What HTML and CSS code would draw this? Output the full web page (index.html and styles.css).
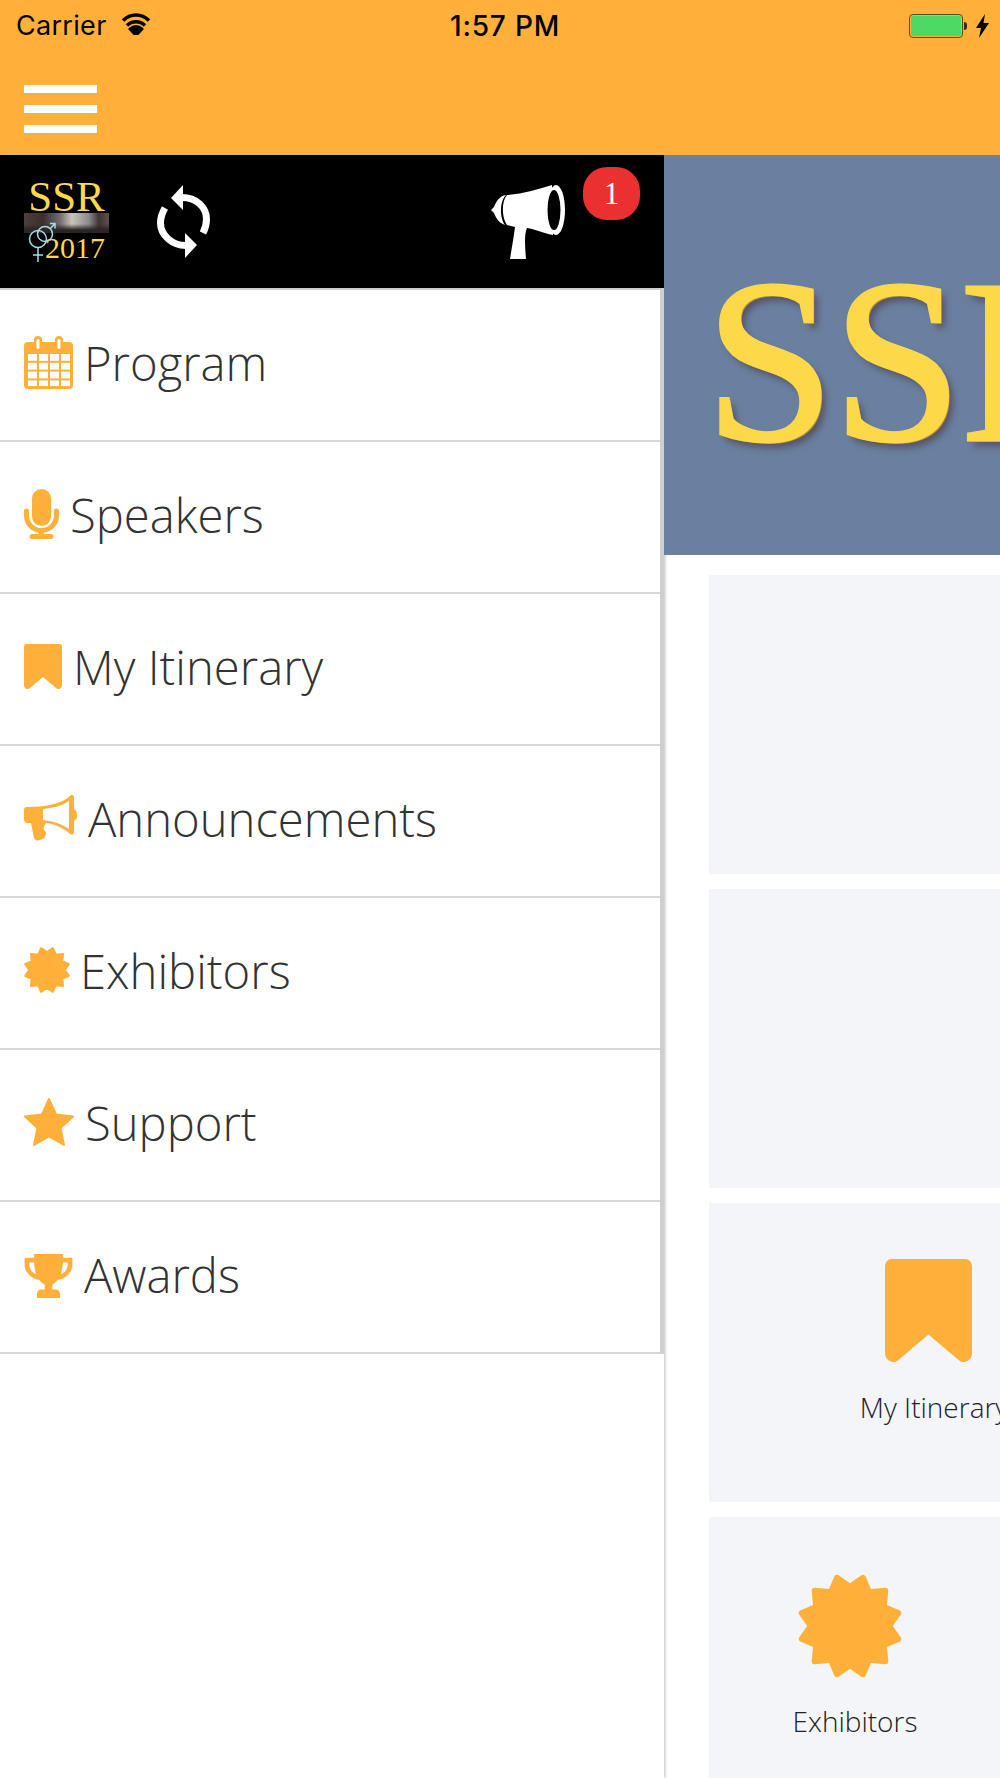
FILE: index.html
```html
<!DOCTYPE html>
<html lang="en">

<head>
  <meta charset="UTF-8">
  <meta name="viewport" content="width=device-width, initial-scale=1.0">
  <title>SSR 2017</title>
  <link rel="stylesheet" href="styles.css">
</head>

<body>
  <svg class="defs" width="0" height="0">
    <defs>
      <symbol id="bookmark" viewBox="0 0 38 45">
        <path d="M3 0H35A3 3 0 0 1 38 3V41C38 45 34 46 32 44L19 33L6 44C4 46 0 45 0 41V3A3 3 0 0 1 3 0Z" />
      </symbol>
      <symbol id="burst" viewBox="0 0 100 100">
        <polygon stroke-width="6" stroke-linejoin="round" points="86,50 94.4,61.9 81,67.5 82.5,82.5 67.5,81 61.9,94.4 50,86 38.1,94.4 32.5,81 17.5,82.5 19,67.5 5.6,61.9 14,50 5.6,38.1 19,32.5 17.5,17.5 32.5,19 38.1,5.6 50,14 61.9,5.6 67.5,19 82.5,17.5 81,32.5 94.4,38.1" />
      </symbol>
      <pattern id="cal-cells" x="4" y="18" width="11" height="8.8" patternUnits="userSpaceOnUse">
        <rect width="9" height="6.8" fill="#fff" />
      </pattern>
    </defs>
  </svg>

  <div class="statusbar">
    <div class="status-left">
      <span>Carrier</span>
      <svg class="wifi" viewBox="0 0 30 22">
        <path d="M15 22L9.5 16C12.5 13 17.500 13 20.500 16Z" fill="#000" />
        <path d="M6 12.500C11 7.500 19 7.500 24 12.500" />
        <path d="M2 7.500C9.500 0 20.500 0 28 7.500" />
      </svg>
    </div>
    <div class="status-time">1:57 PM</div>
    <div class="status-right">
      <div class="battery"><div class="battery-fill"></div></div>
      <div class="battery-cap"></div>
      <svg class="bolt" viewBox="0 0 13 24">
        <polygon points="9,0 0,14 5,14 3,24 13,9 7.500,9" fill="#000" />
      </svg>
    </div>
  </div>

  <div class="topbar">
    <div class="hamburger"><span></span><span></span><span></span></div>
  </div>

  <div class="layout">
    <div class="sidebar">
      <div class="side-head">
        <div class="logo">
          <div class="logo-ssr">SSR</div>
          <div class="logo-strip"></div>
          <div class="logo-year">2017</div>
          <svg class="logo-gender" viewBox="0 0 28 42">
            <g fill="none" stroke="#a8dbe8" stroke-width="1.500">
              <circle cx="10" cy="17" r="8.500" />
              <circle cx="17" cy="12" r="7.500" />
              <path d="M10 25.500V40M5 33H15M22 7L27 1.500M22 1.500H27V6.500" />
            </g>
          </svg>
        </div>
        <svg class="refresh" viewBox="0 0 54 73">
          <polygon points="14,13 26,0 26,25" fill="#fff" />
          <polygon points="40,60 28,48 28,73" fill="#fff" />
          <path d="M25 12.500C39 12.500 49.500 22 49.500 34C49.500 39 48.500 43 46 48" />
          <path d="M29 60.500C15 60.500 3.500 50 3.500 38C3.500 33 5 28 8 23" />
        </svg>
        <svg class="horn" viewBox="0 0 74 74">
          <path d="M15 10C8 11 5 17 3 22L0 25L3 28C5 33 8 38 14 40C9 34 8 17 15 10Z" />
          <path d="M16 10C32 9 48 4 61 0L62 50C52 48 44 44 36 43C33 50 34 62 35 74H19C21 62 23 50 24 42L16 40C11 33 10 17 16 10Z" />
          <ellipse cx="65" cy="25" rx="9" ry="25" />
          <ellipse cx="63" cy="25" rx="6.500" ry="20" fill="#000" />
        </svg>
        <div class="badge">1</div>
      </div>

      <div class="menu">
        <div class="menu-item">
          <svg class="ico ico-cal" viewBox="0 0 49 53">
            <path d="M4 6H10V4A4 4 0 0 1 18 4V6H31V4A4 4 0 0 1 39 4V6H45A4 4 0 0 1 49 10V49A4 4 0 0 1 45 53H4A4 4 0 0 1 0 49V10A4 4 0 0 1 4 6Z" />
            <rect x="12.500" y="3" width="3" height="10" rx="1.500" fill="#fff" />
            <rect x="33.500" y="3" width="3" height="10" rx="1.500" fill="#fff" />
            <rect x="4" y="18" width="42" height="32" fill="url(#cal-cells)" />
          </svg>
          <span>Program</span>
        </div>
        <div class="menu-item">
          <svg class="ico ico-mic" viewBox="0 0 35 50">
            <rect x="8" y="0" width="19" height="37" rx="9.500" />
            <path class="ico-line" d="M2.500 22V26C2.500 35 9 41.500 17.500 41.500C26 41.500 32.500 35 32.500 26V22" />
            <path class="ico-line" d="M17.500 41.500V47M8 47.500H27" />
          </svg>
          <span>Speakers</span>
        </div>
        <div class="menu-item">
          <svg class="ico ico-mark"><use href="#bookmark" /></svg>
          <span>My Itinerary</span>
        </div>
        <div class="menu-item">
          <svg class="ico ico-horn" viewBox="0 0 53 46">
            <path fill-rule="evenodd" d="M3 12C20 12 38 9 46 1C48 -1 50 0 50 3V14C52 15 53 17 53 20C53 23 52 25 50 26V37C50 40 48 40 46 39C40 33 31 29 22 28C20 31 19 33 20 35C22 37 23 39 21 41C21 43 19 44 16 45C13 46 11 45 10 43L7 28H3C1 28 0 26 0 24V15C0 13 1 12 3 12ZM19 14V25C29 26 38 29 45 34V6C38 11 29 13 19 14Z" />
          </svg>
          <span>Announcements</span>
        </div>
        <div class="menu-item">
          <svg class="ico ico-burst"><use href="#burst" /></svg>
          <span>Exhibitors</span>
        </div>
        <div class="menu-item">
          <svg class="ico ico-star" viewBox="0 0 50 48">
            <polygon stroke-width="2" stroke-linejoin="round" points="25,1 32,16.500 49,18.500 36.500,30 40,47 25,38.500 10,47 13.500,30 1,18.500 18,16.500" />
          </svg>
          <span>Support</span>
        </div>
        <div class="menu-item">
          <svg class="ico ico-cup" viewBox="0 0 50 46">
            <path fill-rule="evenodd" d="M10 0H40V4H50V11C50 19 43 26 35 27C33 29 31 31 29 32V37H33C36 37 37 40 37 42V46H13V42C13 40 14 37 17 37H21V32C19 31 17 29 15 27C7 26 0 19 0 11V4H10ZM5 9V11C5 16 8 20 12 21C11 17 10 13 10 9ZM45 9H40C40 13 39 17 38 21C42 20 45 16 45 11Z" />
          </svg>
          <span>Awards</span>
        </div>
      </div>
    </div>

    <div class="main">
      <div class="banner">SSR 2017</div>
      <div class="cards">
        <div class="card"></div>
        <div class="card"></div>
        <div class="card">
          <div class="card-item card-item-wide">
            <svg class="card-mark"><use href="#bookmark" /></svg>
            <div class="card-label">My Itinerary</div>
          </div>
        </div>
        <div class="card">
          <div class="card-item">
            <svg class="card-burst"><use href="#burst" /></svg>
            <div class="card-label">Exhibitors</div>
          </div>
        </div>
      </div>
    </div>
  </div>
</body>

</html>
```

FILE: styles.css
```css
* {
  box-sizing: border-box;
}

html,
body {
  margin: 0;
  height: 1778px;
  overflow: hidden;
  background: #fff;
}

body {
  position: relative;
  font-family: "Open Sans", sans-serif;
  color: #333;
}

.defs {
  position: absolute;
}

.statusbar {
  display: flex;
  justify-content: space-between;
  align-items: center;
  height: 50px;
  padding: 1px 11px 0 16px;
  background: #ffb03b;
  color: #000;
  font-family: Inter, sans-serif;
  position: relative;
}

.status-left {
  display: flex;
  align-items: center;
  gap: 14px;
  font-size: 27px;
  letter-spacing: .3px;
}

.wifi {
  width: 30px;
  height: 22px;
  margin-top: -4px;
  fill: none;
  stroke: #000;
  stroke-width: 3.500;
}

.status-time {
  position: absolute;
  left: 450px;
  font-size: 28px;
  font-weight: 500;
  letter-spacing: .8px;
}

.status-right {
  display: flex;
  align-items: center;
}

.battery {
  width: 54px;
  height: 24px;
  padding: 1px;
  border: 1px solid #5b4a20;
  border-radius: 4px;
}

.battery-fill {
  height: 100%;
  background: #4cd964;
  border-radius: 2px;
}

.battery-cap {
  width: 3px;
  height: 8px;
  margin-left: 1px;
  background: #3a2e12;
  border-radius: 0 3px 3px 0;
}

.bolt {
  width: 13px;
  height: 24px;
  margin-left: 9px;
}

.topbar {
  height: 105px;
  padding: 35px 0 0 24px;
  background: #ffb03b;
}

.hamburger {
  display: flex;
  flex-direction: column;
  gap: 12px;
  width: 73px;
}

.hamburger span {
  height: 8px;
  background: #fff;
}

.layout {
  display: flex;
  height: 1623px;
}

.sidebar {
  flex: none;
  width: 664px;
  box-shadow: 1px 0 3px #bbb;
}

.side-head {
  display: flex;
  align-items: center;
  position: relative;
  height: 135px;
  padding: 0 0 0 24px;
  background: #000;
  border-bottom: 2px solid #cfcfcf;
}

.logo {
  position: relative;
  width: 85px;
  height: 84px;
  font-family: "Liberation Serif", serif;
  color: #fbd84c;
  text-align: center;
}

.logo-ssr {
  font-size: 43px;
  line-height: 33px;
}

.logo-strip {
  height: 20px;
  background:
    linear-gradient(180deg, transparent 55%, #2a2422 85%),
    linear-gradient(90deg, #4d403c 0%, #3a2f2b 22%, #6f6a6e 42%, #c8c4b8 56%, #8d8a90 76%, #3f3532 88%, #5f5048 100%);
}

.logo-year {
  font-size: 30px;
  line-height: 30px;
  margin-left: 21px;
  text-align: left;
}

.logo-gender {
  position: absolute;
  left: 4px;
  top: 42px;
  width: 28px;
  height: 42px;
}

.refresh {
  width: 54px;
  height: 73px;
  margin-left: 48px;
  fill: none;
  stroke: #fff;
  stroke-width: 7;
}

.refresh polygon {
  stroke: none;
}

.horn {
  width: 74px;
  height: 74px;
  margin-left: 280px;
  fill: #fff;
}

.badge {
  position: absolute;
  left: 583px;
  top: 12px;
  width: 57px;
  height: 53px;
  background: #ea3030;
  border-radius: 24px;
  color: #fff;
  font-family: "Liberation Serif", serif;
  font-size: 32px;
  line-height: 53px;
  text-align: center;
}

.menu {
  border-right: 4px solid #cfcfcf;
}

.menu-item {
  display: flex;
  align-items: center;
  gap: 11px;
  height: 152px;
  padding: 0 0 4px 24px;
  border-bottom: 2px solid #d6d6d6;
  font-size: 47.200px;
  font-weight: 300;
  color: #333;
}

.ico {
  flex: none;
  margin-top: -2px;
  fill: #ffb03b;
  stroke: #ffb03b;
  stroke-width: 0;
}

.ico-line {
  fill: none;
  stroke-width: 5;
  stroke-linecap: round;
}

.ico-cal {
  width: 49px;
  height: 53px;
}

.ico-mic {
  width: 35px;
  height: 50px;
}

.ico-mark {
  width: 38px;
  height: 45px;
}

.ico-horn {
  width: 53px;
  height: 46px;
}

.ico-burst {
  width: 48px;
  height: 48px;
  margin-left: -1px;
  margin-right: -2px;
}

.ico-star {
  width: 50px;
  height: 48px;
}

.ico-cup {
  width: 49px;
  height: 44px;
  margin-top: 2px;
}

.main {
  flex: 1;
  min-width: 0;
  overflow: hidden;
}

.banner {
  height: 400px;
  padding-left: 41px;
  background: #6a80a0;
  font-family: "Liberation Serif", serif;
  font-size: 233px;
  letter-spacing: -2px;
  line-height: 412px;
  white-space: nowrap;
  color: #fdd94a;
  -webkit-text-stroke: 3px #fdd94a;
  text-shadow: 2px 2px 0 #b08f2c, 5px 6px 7px rgba(70, 50, 60, .6);
}

.cards {
  display: flex;
  flex-direction: column;
  gap: 15px;
  padding: 20px 0 0 45px;
}

.card {
  flex: none;
  height: 299px;
  background: #f4f5f9;
}

.card-item {
  display: flex;
  flex-direction: column;
  align-items: center;
  width: 292px;
  padding-top: 56px;
  color: #222;
}

.card-item-wide {
  width: 438px;
}

.card-mark {
  width: 87px;
  height: 103px;
  margin-bottom: 3px;
  fill: #ffb03b;
}

.card-item-wide .card-label {
  margin-left: 12px;
}

.card-burst {
  width: 108px;
  height: 108px;
  margin: -1px 10px 0 0;
  fill: #ffb03b;
  stroke: #ffb03b;
}

.card-label {
  margin-top: 23px;
  font-size: 28px;
  font-weight: 300;
  line-height: 36px;
  white-space: nowrap;
}

.card-item-wide .card-label {
  margin-top: 24px;
}
```
